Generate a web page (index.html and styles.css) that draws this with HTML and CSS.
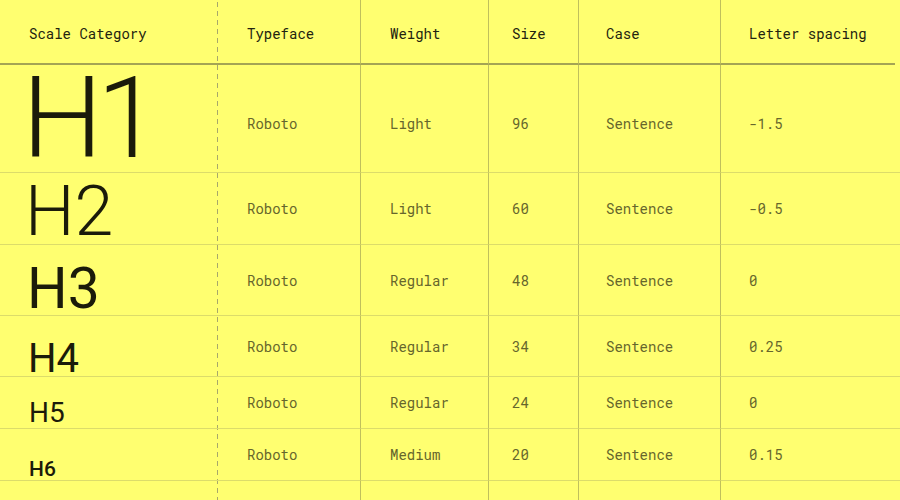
FILE: index.html
```html
<!DOCTYPE html>
<html>
<head>
<meta charset="utf-8">
<link rel="stylesheet" href="styles.css">
</head>
<body>
<div class="table">
  <div class="cell hd c1">Scale Category</div>
  <div class="cell hd c2">Typeface</div>
  <div class="cell hd c3">Weight</div>
  <div class="cell hd c4">Size</div>
  <div class="cell hd c5">Case</div>
  <div class="cell hd c6 last">Letter spacing</div>

  <div class="cell c1 r1"><span class="h h1">H1</span></div>
  <div class="cell c2 r1">Roboto</div>
  <div class="cell c3 r1">Light</div>
  <div class="cell c4 r1">96</div>
  <div class="cell c5 r1">Sentence</div>
  <div class="cell c6 r1">-1.5</div>

  <div class="cell c1"><span class="h h2">H2</span></div>
  <div class="cell c2">Roboto</div>
  <div class="cell c3">Light</div>
  <div class="cell c4">60</div>
  <div class="cell c5">Sentence</div>
  <div class="cell c6">-0.5</div>

  <div class="cell c1"><span class="h h3">H3</span></div>
  <div class="cell c2">Roboto</div>
  <div class="cell c3">Regular</div>
  <div class="cell c4">48</div>
  <div class="cell c5">Sentence</div>
  <div class="cell c6">0</div>

  <div class="cell c1"><span class="h h4">H4</span></div>
  <div class="cell c2">Roboto</div>
  <div class="cell c3">Regular</div>
  <div class="cell c4">34</div>
  <div class="cell c5">Sentence</div>
  <div class="cell c6">0.25</div>

  <div class="cell c1"><span class="h h5">H5</span></div>
  <div class="cell c2">Roboto</div>
  <div class="cell c3">Regular</div>
  <div class="cell c4">24</div>
  <div class="cell c5">Sentence</div>
  <div class="cell c6">0</div>

  <div class="cell c1"><span class="h h6">H6</span></div>
  <div class="cell c2">Roboto</div>
  <div class="cell c3">Medium</div>
  <div class="cell c4">20</div>
  <div class="cell c5">Sentence</div>
  <div class="cell c6">0.15</div>

  <div class="cell c1 end"></div>
  <div class="cell c2 end"></div>
  <div class="cell c3 end"></div>
  <div class="cell c4 end"></div>
  <div class="cell c5 end"></div>
  <div class="cell c6 end"></div>
</div>
</body>
</html>
```
FILE: styles.css
```css
html, body {
  margin: 0;
  padding: 0;
  width: 900px;
  height: 500px;
  overflow: hidden;
  background: #ffff70;
}

.table {
  display: grid;
  grid-template-columns: 218px 143px 128px 90px 142px 179px;
  grid-template-rows: 65px 108px 72px 71px 61px 52px 52px 19px;
  width: 900px;
  height: 500px;
  font-family: "Roboto Mono", "DejaVu Sans Mono", "Liberation Mono", monospace;
  font-size: 14px;
  color: #66662c;
  background-image: linear-gradient(to bottom, #a8a86a 0, #a8a86a 5px, transparent 5px, transparent 9px);
  background-size: 1px 9px;
  background-position: 217px 2px;
  background-repeat: repeat-y;
}

.cell {
  display: flex;
  align-items: center;
  box-sizing: border-box;
  border-bottom: 1px solid #dcdc6a;
  border-right: 1px solid #c0c05c;
  padding-left: 29px;
  white-space: nowrap;
}

.c1 { border-right: none; }
.c4 { padding-left: 23px; }
.c5 { padding-left: 27px; }
.c6 { padding-left: 28px; border-right: none; }

.hd {
  color: #23230f;
  border-bottom: 2px solid #a4a454;
  padding-top: 3px;
}
.hd.last { margin-right: 5px; }

.r1 { padding-top: 10px; }
.c1.r1 { padding-top: 0; }

.end { border-bottom: none; }

.h {
  font-family: Roboto, "Noto Sans", sans-serif;
  color: #1b1b0a;
  line-height: 0.8;
}
.h1 { font-size: 114px; font-weight: 300; margin-left: -7px; letter-spacing: -6px; }
.h2 { font-size: 70px; font-weight: 300; margin-left: -4px; padding-top: 4px; }
.h3 { font-size: 57px; font-weight: 400; margin-left: -2px; padding-top: 18px; }
.h4 { font-size: 40px; font-weight: 400; margin-left: -1px; padding-top: 25px; }
.h5 { font-size: 28px; font-weight: 400; padding-top: 22px; }
.h6 { font-size: 21px; font-weight: 500; padding-top: 30px; }
```
